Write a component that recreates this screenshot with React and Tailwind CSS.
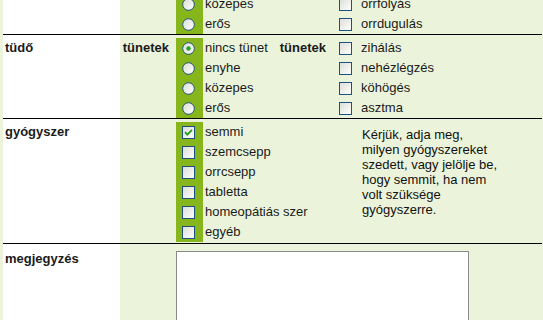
import { useState } from "react";

/* ================= DATA ================= */

const SEVERITY = ["nincs tünet", "enyhe", "közepes", "erős"];

// the row above (orr) is scrolled mostly out of view, only its last two lines show
const PREV_TAIL = {
    severity: ["közepes", "erős"],
    symptoms: ["orrfolyás", "orrdugulás"],
};

const LUNG_SYMPTOMS = ["zihálás", "nehézlégzés", "köhögés", "asztma"];

const MEDS = [
    "semmi",
    "szemcsepp",
    "orrcsepp",
    "tabletta",
    "homeopátiás szer",
    "egyéb",
];

/* ================= CONTROLS ================= */

function Radio({ checked, onClick }) {
    return (
        <svg width="13" height="13" viewBox="0 0 13 13" onClick={onClick} className="cursor-pointer">
            <defs>
                <linearGradient id="rg" x1="0" y1="0" x2="1" y2="1">
                    <stop offset="0" stopColor="#dcdcd6" />
                    <stop offset="1" stopColor="#ffffff" />
                </linearGradient>
            </defs>
            <circle cx="6.5" cy="6.5" r="5.8" fill="url(#rg)" stroke="#1d5281" strokeWidth="1" />
            {checked && <circle cx="6.5" cy="6.5" r="2.2" fill="#21a121" />}
        </svg>
    );
}

function Checkbox({ checked, onClick }) {
    return (
        <svg width="13" height="13" viewBox="0 0 13 13" onClick={onClick} className="cursor-pointer">
            <defs>
                <linearGradient id="cg" x1="0" y1="0" x2="1" y2="1">
                    <stop offset="0" stopColor="#dcdcd7" />
                    <stop offset="1" stopColor="#ffffff" />
                </linearGradient>
            </defs>
            <rect x="0.5" y="0.5" width="12" height="12" fill="url(#cg)" stroke="#1c5180" strokeWidth="1" />
            {checked && (
                <path d="M3 6.2 L5.3 8.6 L10 3.8" fill="none" stroke="#21a121" strokeWidth="1.8" />
            )}
        </svg>
    );
}

function useToggleList(initial = []) {
    const [list, setList] = useState(initial);
    const toggle = (s) =>
        setList((c) => (c.includes(s) ? c.filter((x) => x !== s) : [...c, s]));
    return [list, toggle];
}

/* ================= ROWS ================= */

function SymptomRow({ label, severity, symptoms, selected = -1 }) {
    const [sev, setSev] = useState(selected);
    const [checked, toggle] = useToggleList();

    return (
        <div className="flex border-b border-black">
            <div className="w-[117px] bg-white pl-[2px] pt-[3px] font-bold leading-[20px]">
                {label}
            </div>
            <div className="w-[56px] pr-[7px] pt-[3px] text-right font-bold leading-[20px]">
                {label && "tünetek"}
            </div>
            <div className="w-[101px] pt-[3px] flex flex-col">
                {severity.map((s, i) => (
                    <div key={s} className="flex h-[20px] items-center">
                        <div className="w-[27px] h-full bg-[#86b51c] flex items-center pl-[6px]">
                            <Radio checked={sev === i} onClick={() => setSev(i)} />
                        </div>
                        <span className="pl-[2px]">{s}</span>
                    </div>
                ))}
            </div>
            <div className="w-[56px] pr-[7px] pt-[3px] text-right font-bold leading-[20px]">
                {label && "tünetek"}
            </div>
            <div className="flex-1 pt-[3px] flex flex-col">
                {symptoms.map((s) => (
                    <div key={s} className="flex h-[20px] items-center">
                        <div className="w-[28px] flex items-center pl-[6px]">
                            <Checkbox checked={checked.includes(s)} onClick={() => toggle(s)} />
                        </div>
                        <span>{s}</span>
                    </div>
                ))}
            </div>
        </div>
    );
}

function MedsRow() {
    const [checked, toggle] = useToggleList(["semmi"]);

    return (
        <div className="flex border-b border-black">
            <div className="w-[117px] bg-white pl-[2px] pt-[3px] font-bold leading-[20px]">
                gyógyszer
            </div>
            <div className="w-[56px]" />
            <div className="w-[186px] pt-[3px] pb-[1px] flex flex-col">
                {MEDS.map((s) => (
                    <div key={s} className="flex h-[20px] items-center">
                        <div className="w-[27px] h-full bg-[#86b51c] flex items-center pl-[6px]">
                            <Checkbox checked={checked.includes(s)} onClick={() => toggle(s)} />
                        </div>
                        <span className="pl-[2px]">{s}</span>
                    </div>
                ))}
            </div>
            <p className="pt-[8px] leading-[15px] text-[#111]">
                Kérjük, adja meg,
                <br />
                milyen gyógyszereket
                <br />
                szedett, vagy jelölje be,
                <br />
                hogy semmit, ha nem
                <br />
                volt szüksége
                <br />
                gyógyszerre.
            </p>
        </div>
    );
}

function NoteRow() {
    return (
        <div className="flex">
            <div className="w-[117px] bg-white pl-[2px] pt-[5px] font-bold leading-[20px]">
                megjegyzés
            </div>
            <div className="w-[56px]" />
            <div className="pt-[7px]">
                <textarea className="block w-[293px] h-[90px] bg-white border border-[#8a8a8a] resize-none outline-none" />
            </div>
        </div>
    );
}

/* ================= PAGE ================= */

export default function App() {
    return (
        <div
            className="h-[320px] w-[543px] overflow-hidden bg-[#ebf4db] text-[13px] text-[#1a1a1a]"
            style={{ fontFamily: '"Liberation Sans", Arial, sans-serif' }}
        >
            <div className="ml-[3px] w-[539px] -mt-[9px]">
                <SymptomRow label="" severity={PREV_TAIL.severity} symptoms={PREV_TAIL.symptoms} />
                <SymptomRow label="tüdő" severity={SEVERITY} symptoms={LUNG_SYMPTOMS} selected={0} />
                <MedsRow />
                <NoteRow />
            </div>
        </div>
    );
}
